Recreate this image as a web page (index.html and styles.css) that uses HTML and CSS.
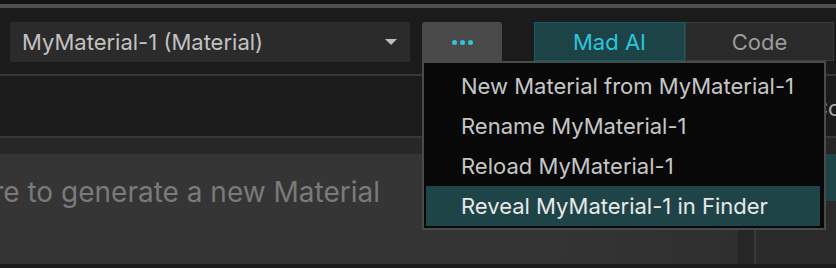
FILE: index.html
```html
<!DOCTYPE html>
<html lang="en">

<head>
    <meta charset="utf-8">
    <meta name="viewport" content="width=device-width, initial-scale=1.0">
    <title>Material Editor</title>
    <link rel="stylesheet" href="styles.css">
</head>

<body>
    <div class="topstrip"></div>

    <header class="toolbar">
        <div class="select">
            <span class="select_label">MyMaterial-1 (Material)</span>
            <span class="caret"></span>
        </div>
        <button class="more"><i></i><i></i><i></i></button>
        <div class="segments">
            <button class="seg active">Mad AI</button>
            <button class="seg">Code</button>
        </div>
    </header>

    <div class="subbar">
        <span class="peek">Co</span>
    </div>

    <section class="main">
        <div class="editor">
            <div class="tabstrip"></div>
            <div class="prompt">
                <p>Type a prompt here to generate a new Material</p>
            </div>
        </div>
        <div class="gutter"></div>
        <div class="side">
            <div class="tabstrip"></div>
            <div class="side_active"></div>
        </div>
    </section>

    <!-- dropdown from the ... button -->
    <ul class="menu">
        <li>New Material from MyMaterial-1</li>
        <li>Rename MyMaterial-1</li>
        <li>Reload MyMaterial-1</li>
        <li class="hover">Reveal MyMaterial-1 in Finder</li>
    </ul>
</body>

</html>
```

FILE: styles.css
```css
/* base */

body {
    margin: 0;
    width: 836px;
    height: 268px;
    overflow: hidden;
    background-color: #1b1b1b;
    font-family: Inter, "Noto Sans", sans-serif;
    position: relative;
}

button {
    font-family: inherit;
    border: none;
    outline: none;
    cursor: pointer;
}

/* top */

.topstrip {
    height: 4px;
    background-color: #131313;
    border-bottom: 4px solid #4f4f4f;
}

.toolbar {
    display: flex;
    align-items: flex-start;
    height: 52px;
    padding: 14px 0 0 10px;
    background-color: #1b1b1b;
}

.select {
    display: flex;
    align-items: center;
    justify-content: space-between;
    width: 400px;
    height: 40px;
    box-sizing: border-box;
    padding: 0 13px 0 12px;
    background-color: #2b2b2b;
    border-radius: 2px;
    color: #c2c2c2;
    font-size: 22px;
}

.caret {
    width: 0;
    height: 0;
    border-left: 6.5px solid transparent;
    border-right: 6.5px solid transparent;
    border-top: 6px solid #bdbdbd;
}

.more {
    display: flex;
    align-items: center;
    justify-content: center;
    gap: 3px;
    width: 80px;
    height: 40px;
    margin-left: 12px;
    background-color: #4a4a4a;
    border-radius: 3px;
}

.more i {
    width: 5px;
    height: 5px;
    border-radius: 50%;
    background-color: #2fc5de;
}

.segments {
    display: flex;
    margin-left: 32px;
}

.seg {
    height: 39px;
    font-size: 22px;
    background-color: #2a2a2a;
    color: #9c9c9c;
    border: 1px solid #3b3b3b;
    width: 149px;
}

.seg.active {
    width: 151px;
    background-color: #1e4347;
    color: #2cc6dc;
    border-color: #0d626a;
}

.subbar {
    display: flex;
    align-items: center;
    height: 64px;
    padding: 4px 0 0 826px;
    box-sizing: border-box;
    border-top: 2px solid #383838;
    border-bottom: 2px solid #383838;
}

.peek {
    font-size: 22px;
    color: #a8a8a8;
    margin-left: -14px;
}

/* main area */

.main {
    display: flex;
    height: 126px;
}

.tabstrip {
    height: 16px;
    background-color: #272727;
}

.editor {
    width: 738px;
    display: flex;
    flex-direction: column;
}

.prompt {
    flex: 1;
    background: linear-gradient(100deg, #353535 70%, #2f2f2f 100%);
    display: flex;
    justify-content: flex-end;
    width: 380px;
    overflow: hidden;
    padding-right: 358px;
}

.prompt p {
    margin: 21px 0 0;
    white-space: nowrap;
    font-size: 28px;
    color: #7a7a7a;
}

.gutter {
    width: 16px;
    background-color: #262626;
    border-right: 2px solid #3a3a3a;
}

.side {
    flex: 1;
    background-color: #2a2a2a;
}

.side .tabstrip {
    background-color: #262626;
}

.side_active {
    height: 47px;
    margin-left: 70px;
    background-color: #1f4448;
}

/* menu */

.menu {
    position: absolute;
    left: 422px;
    top: 61px;
    width: 404px;
    box-sizing: border-box;
    margin: 0;
    padding: 3px 4px 2px 2px;
    list-style-type: none;
    background-color: #080808;
    border: 2px solid #4a4a4a;
}

.menu li {
    height: 40px;
    display: flex;
    align-items: center;
    padding-left: 35px;
    font-size: 22px;
    color: #c6c6c6;
}

.menu li.hover {
    background-color: #1f4448;
    color: #e8e8e8;
}
```
